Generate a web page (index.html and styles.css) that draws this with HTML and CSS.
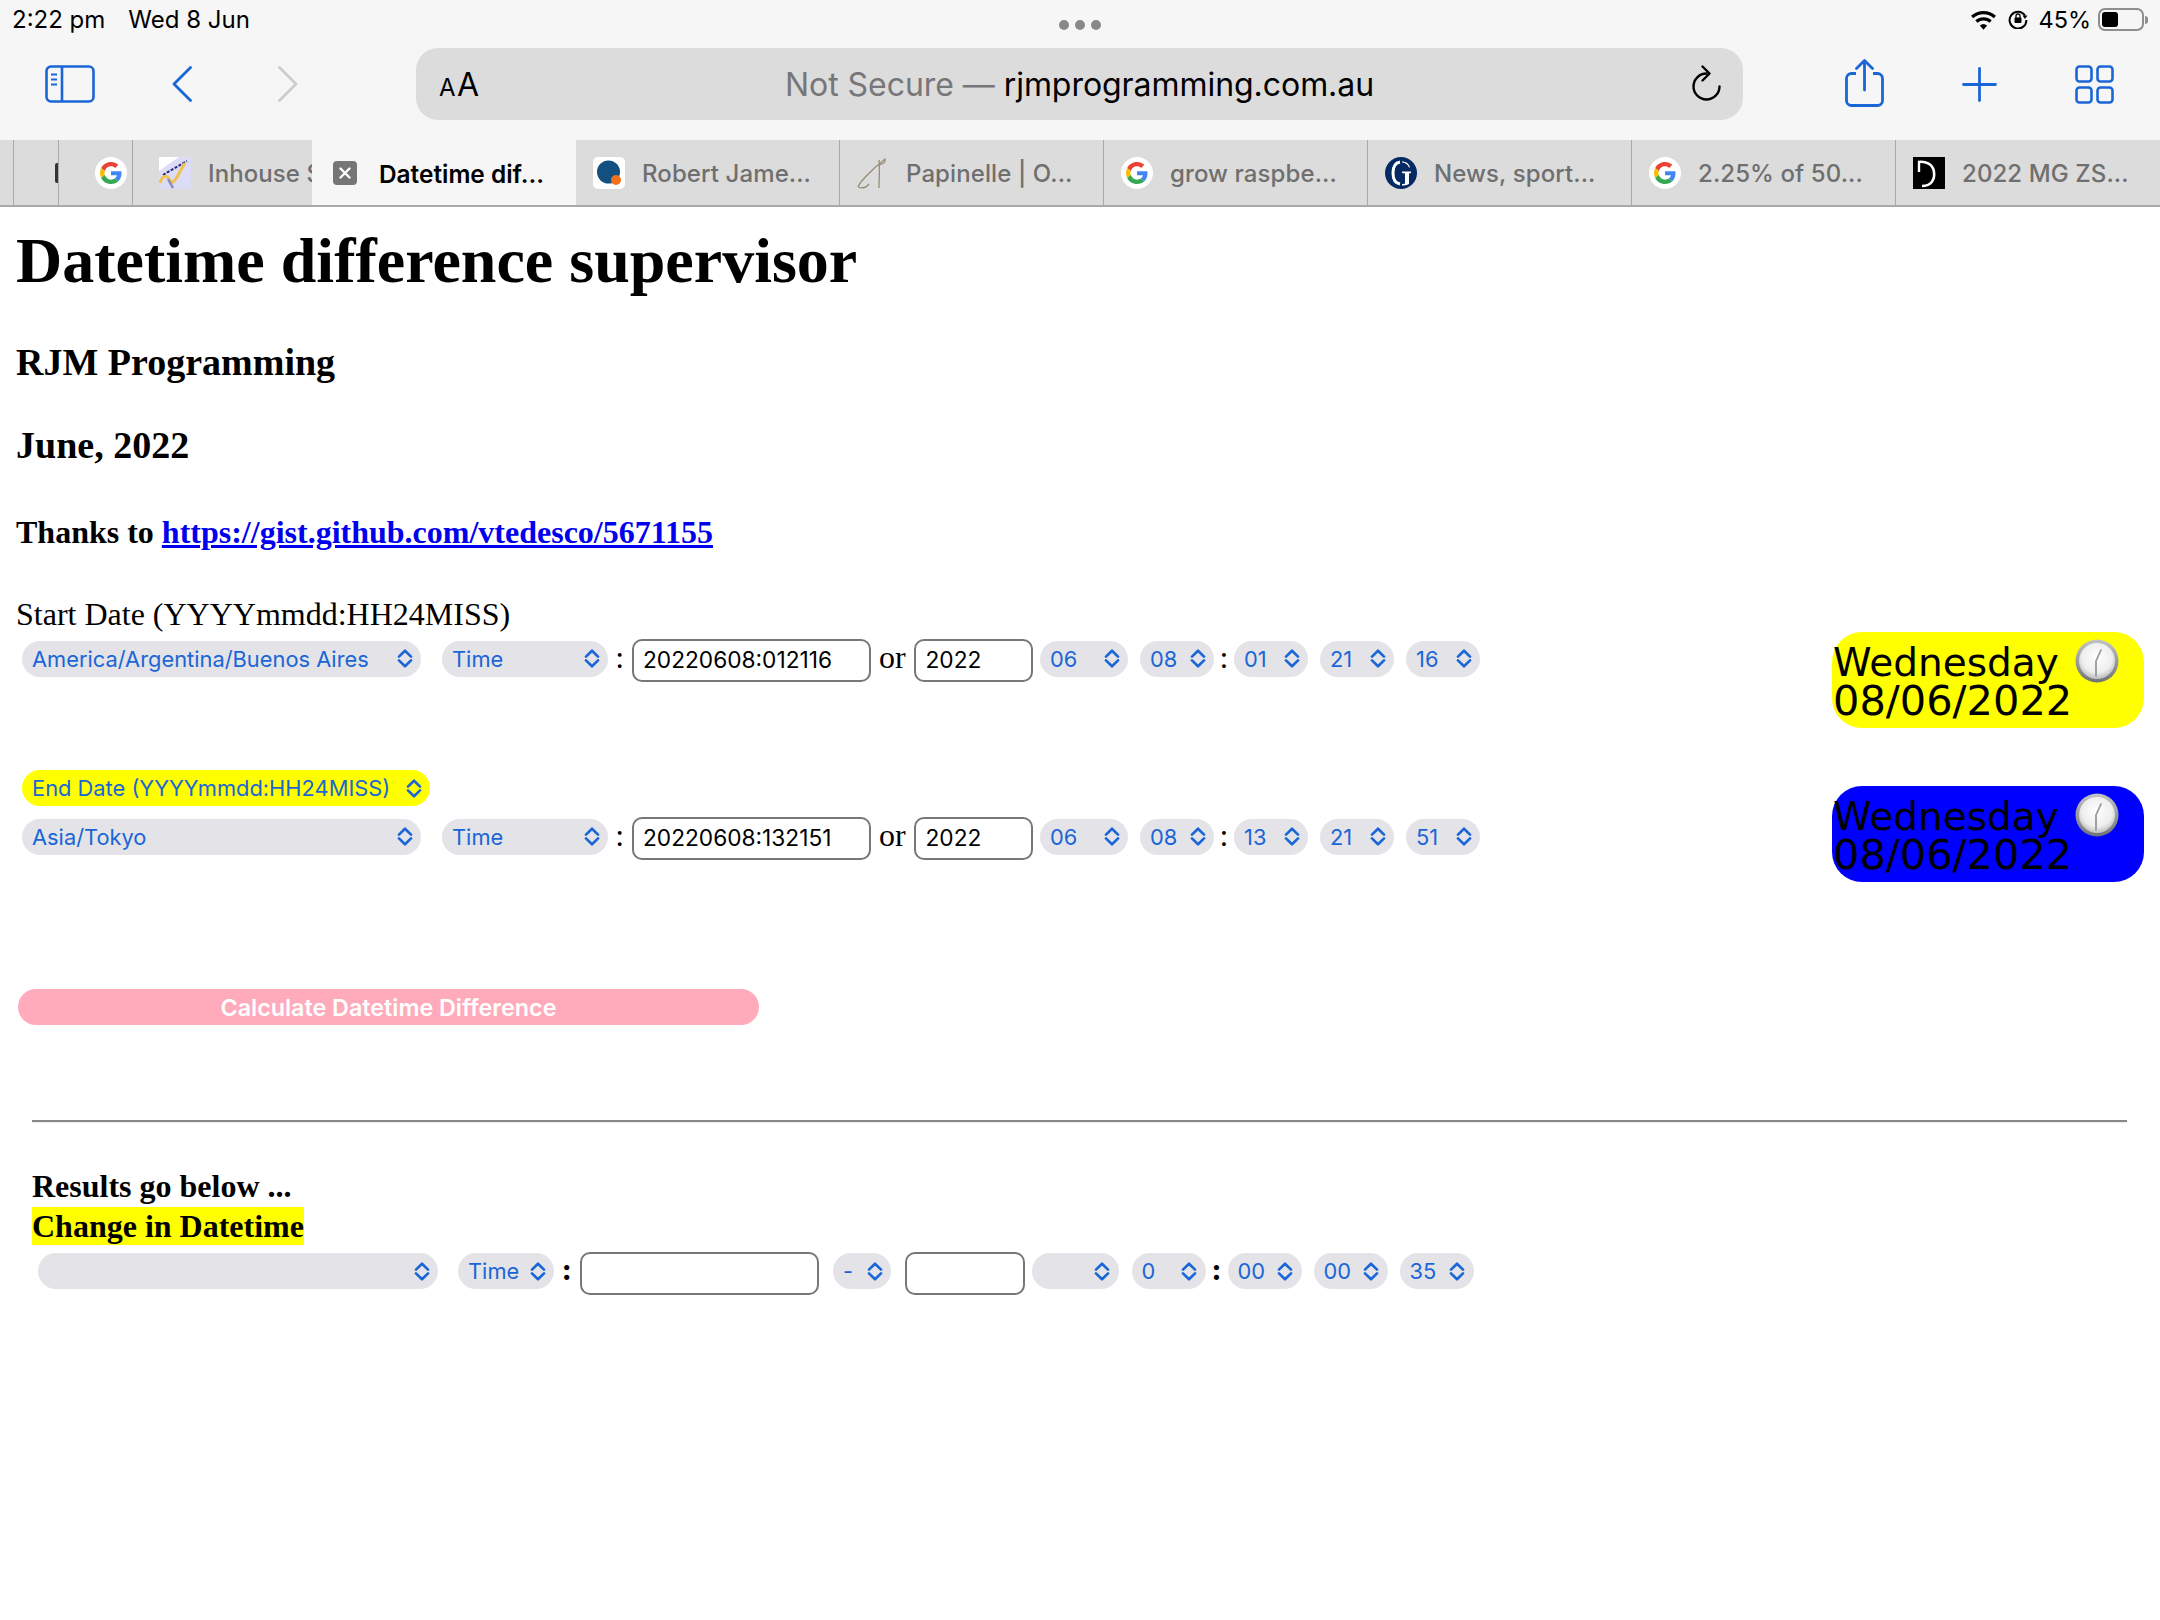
FILE: index.html
```html
<!DOCTYPE html>
<html lang="en">
<head>
<meta charset="utf-8">
<title>Datetime difference supervisor</title>
<link rel="stylesheet" href="styles.css">
</head>
<body>
<svg class="defs" aria-hidden="true">
  <symbol id="chev" viewBox="0 0 15 18"><path d="M1.800 7.200 7.500 1.600l5.700 5.600M1.800 10.800l5.700 5.600 5.700-5.600" fill="none" stroke="#1b66d6" stroke-width="2.500" stroke-linecap="round" stroke-linejoin="round"/></symbol>
  <symbol id="goog" viewBox="0 0 32 32">
    <circle cx="16" cy="16" r="16" fill="#fff"/>
    <g transform="translate(5 5) scale(.458)">
      <path fill="#EA4335" d="M24 9.500c3.540 0 6.710 1.220 9.210 3.600l6.850-6.850C35.900 2.380 30.470 0 24 0 14.620 0 6.510 5.380 2.560 13.220l7.980 6.190C12.430 13.720 17.740 9.500 24 9.500z"/>
      <path fill="#4285F4" d="M46.980 24.550c0-1.570-.15-3.090-.38-4.550H24v9.020h12.940c-.58 2.960-2.260 5.480-4.780 7.180l7.730 6c4.510-4.180 7.090-10.360 7.090-17.650z"/>
      <path fill="#FBBC05" d="M10.530 28.590c-.48-1.450-.76-2.990-.76-4.590s.27-3.140.76-4.590l-7.980-6.190C.92 16.460 0 20.120 0 24c0 3.880.92 7.540 2.560 10.780l7.970-6.190z"/>
      <path fill="#34A853" d="M24 48c6.480 0 11.930-2.130 15.890-5.810l-7.730-6c-2.150 1.450-4.920 2.300-8.160 2.300-6.260 0-11.570-4.220-13.470-9.910l-7.980 6.190C6.510 42.620 14.620 48 24 48z"/>
    </g>
  </symbol>
  <symbol id="clock" viewBox="0 0 44 44">
    <defs>
      <linearGradient id="rim" x1="0" y1="0" x2="0" y2="1"><stop offset="0" stop-color="#c4c4c4"/><stop offset="1" stop-color="#6f7378"/></linearGradient>
      <radialGradient id="face" cx=".5" cy=".4" r=".6"><stop offset="0" stop-color="#fff"/><stop offset=".7" stop-color="#eeeeee"/><stop offset="1" stop-color="#bdbdbd"/></radialGradient>
    </defs>
    <circle cx="22" cy="22" r="21.500" fill="url(#rim)"/>
    <circle cx="22" cy="22" r="18" fill="url(#face)"/>
    <path d="M21 37V22l5-11" fill="none" stroke="#9a9a9a" stroke-width="1.800" stroke-linecap="round" stroke-linejoin="round"/>
  </symbol>
</svg>

<header class="chrome">
  <div class="status">
    <div class="status-left"><span>2:22 pm</span><span>Wed 8 Jun</span></div>
    <div class="dots"><i></i><i></i><i></i></div>
    <div class="status-right">
      <svg class="wifi" viewBox="0 0 28 20"><path d="M14 20l-3.800-4.400a6 6 0 0 1 7.600 0z" fill="#000"/><path d="M6.600 11.600a11 11 0 0 1 14.800 0M2.200 6.800a17.600 17.600 0 0 1 23.600 0" fill="none" stroke="#000" stroke-width="3.400"/></svg>
      <svg class="lock" viewBox="0 0 20 20"><path d="M17 6.500A8.400 8.400 0 1 0 18.400 11" fill="none" stroke="#000" stroke-width="2"/><path d="M14.500 6.500h5l-2.500 3.500z" fill="#000"/><rect x="6.500" y="8.500" width="7" height="5.500" rx="1" fill="#000"/><path d="M8 9V7a2 2 0 0 1 4 0v2" fill="none" stroke="#000" stroke-width="1.300"/></svg>
      <span class="pct">45%</span>
      <div class="battery"><div class="battery-fill"></div></div>
      <div class="battery-nub"></div>
    </div>
  </div>
  <div class="toolbar">
    <svg class="ic-side" viewBox="0 0 50 38"><rect x="1.500" y="1.500" width="47" height="35" rx="4.500" fill="none" stroke="#1b66d6" stroke-width="2.600"/><path d="M17 1.500v35" stroke="#1b66d6" stroke-width="2.600"/><path d="M6 9.500h6M6 14.500h6M6 19.500h6" stroke="#1b66d6" stroke-width="2.200"/></svg>
    <svg class="ic-back" viewBox="0 0 20 36"><path d="M18.500 1.500 2 18l16.500 16.500" fill="none" stroke="#1b66d6" stroke-width="2.800" stroke-linecap="round" stroke-linejoin="round"/></svg>
    <svg class="ic-fwd" viewBox="0 0 20 36"><path d="M1.500 1.500 18 18 1.500 34.500" fill="none" stroke="#cccccc" stroke-width="2.800" stroke-linecap="round" stroke-linejoin="round"/></svg>
    <div class="url">
      <span class="aa"><small>A</small>A</span>
      <span class="url-text"><span class="url-dim">Not Secure — </span>rjmprogramming.com.au</span>
      <svg class="ic-reload" viewBox="0 0 30 36"><path d="M14.500 8.500A13 13 0 1 0 27.500 21.500" fill="none" stroke="#000" stroke-width="2.400" stroke-linecap="round"/><path d="M10.500 1.500 17.500 8.500 10.500 15.500" fill="none" stroke="#000" stroke-width="2.400" stroke-linecap="round" stroke-linejoin="round"/></svg>
    </div>
    <svg class="ic-share" viewBox="0 0 39 48"><path d="M11 14.500H6.500A5 5 0 0 0 1.500 19.500V41.500a5 5 0 0 0 5 5h26a5 5 0 0 0 5-5V19.500a5 5 0 0 0-5-5H28" fill="none" stroke="#1b66d6" stroke-width="2.800"/><path d="M19.500 31V2M11.500 9.500l8-8 8 8" fill="none" stroke="#1b66d6" stroke-width="2.800" stroke-linecap="round" stroke-linejoin="round"/></svg>
    <svg class="ic-plus" viewBox="0 0 35 35"><path d="M17.500 1.500v32M1.500 17.500h32" stroke="#1b66d6" stroke-width="2.800" stroke-linecap="round"/></svg>
    <svg class="ic-tabs" viewBox="0 0 39 39"><g fill="none" stroke="#1b66d6" stroke-width="2.600"><rect x="1.500" y="1.500" width="15" height="15" rx="3"/><rect x="22.500" y="1.500" width="15" height="15" rx="3"/><rect x="1.500" y="22.500" width="15" height="15" rx="3"/><rect x="22.500" y="22.500" width="15" height="15" rx="3"/></g></svg>
  </div>
  <nav class="tabs">
    <div class="tab tab-sliver"></div>
    <div class="tab tab-stack1"><i class="stack-mark"></i></div>
    <div class="tab tab-stack2"><svg class="fav"><use href="#goog"/></svg></div>
    <div class="tab tab-clip">
      <svg class="fav" viewBox="0 0 32 32"><rect width="32" height="32" fill="#dcdcf6"/><path d="M0 0h20L0 14z" fill="#fff"/><path d="M4 18 28 4" stroke="#2c2a78" stroke-width="2" stroke-dasharray="3 1.500"/><path d="M1 26c2-7 6-9 9-4s3 4 6 1 4-8 10-17" fill="none" stroke="#efc34a" stroke-width="3"/><path d="M9 22l5 9" stroke="#8a8ac0" stroke-width="2.500"/></svg>
      <span class="tab-label">Inhouse Sales</span>
    </div>
    <div class="tab tab-active">
      <svg class="fav-x" viewBox="0 0 24 24"><rect width="24" height="24" rx="4" fill="#767676"/><path d="M7.500 7.500l9 9M16.500 7.500l-9 9" stroke="#fff" stroke-width="2.400" stroke-linecap="round"/></svg>
      <span class="tab-label">Datetime dif...</span>
    </div>
    <div class="tab">
      <svg class="fav" viewBox="0 0 32 32"><rect width="32" height="32" rx="5" fill="#fff"/><circle cx="15.500" cy="15" r="11.500" fill="#14507f"/><circle cx="23" cy="23" r="5" fill="#f0701c"/></svg>
      <span class="tab-label">Robert Jame...</span>
    </div>
    <div class="tab">
      <svg class="fav" viewBox="0 0 32 32"><path d="M1 30C3 24 18 10 28 2c1 3-2 5-6 6M22 3c1 8 0 18 0 28M1 30c5 2 8 1 11-3" fill="none" stroke="#968f76" stroke-width="1.300"/></svg>
      <span class="tab-label">Papinelle | O...</span>
    </div>
    <div class="tab"><svg class="fav"><use href="#goog"/></svg><span class="tab-label">grow raspbe...</span></div>
    <div class="tab">
      <svg class="fav" viewBox="0 0 32 32"><circle cx="16" cy="16" r="16" fill="#052962"/><path d="M15 5C9 6 8 11 8 16s1 10 7 11" fill="none" stroke="#fff" stroke-width="3"/><path d="M17 4.500c4 0 7 2 8 6h-1c-1-3-4-5-7-5zM17 14.500h9v1.500l-2 .6V27c-2 1-5 1.500-7 1.500V27c1 0 2 0 3-.5V16.600l-3-.6z" fill="#fff"/></svg>
      <span class="tab-label">News, sport...</span>
    </div>
    <div class="tab"><svg class="fav"><use href="#goog"/></svg><span class="tab-label">2.25% of 50...</span></div>
    <div class="tab">
      <svg class="fav" viewBox="0 0 32 32"><rect width="32" height="32" fill="#000"/><path d="M5 5c8-1 15 2 16 10s-3 14-12 14" fill="none" stroke="#fff" stroke-width="2.600"/><path d="M6 5v10" stroke="#fff" stroke-width="2.400"/></svg>
      <span class="tab-label">2022 MG ZS...</span>
    </div>
  </nav>
</header>

<main class="page">
  <h1 class="title">Datetime difference supervisor</h1>
  <h2 class="sub sub-first">RJM Programming</h2>
  <h2 class="sub">June, 2022</h2>
  <h3 class="thanks">Thanks to <a href="#">https://gist.github.com/vtedesco/5671155</a></h3>
  <div class="start-label">Start Date (YYYYmmdd:HH24MISS)</div>

  <section class="block">
    <div class="controls controls-start">
      <div class="row">
        <span class="sel w-tz"><span>America/Argentina/Buenos Aires</span><svg class="chev"><use href="#chev"/></svg></span>
        <span class="sel w-time ml21"><span>Time</span><svg class="chev"><use href="#chev"/></svg></span>
        <span class="sep w-sep1">:</span>
        <span class="field w-field">20220608:012116</span>
        <span class="sep w-or">or</span>
        <span class="field w-year">2022</span>
        <span class="sel w-88 ml7"><span>06</span><svg class="chev"><use href="#chev"/></svg></span>
        <span class="sel w-74 ml12"><span>08</span><svg class="chev"><use href="#chev"/></svg></span>
        <span class="sep w-sep2">:</span>
        <span class="sel w-74"><span>01</span><svg class="chev"><use href="#chev"/></svg></span>
        <span class="sel w-74 ml12"><span>21</span><svg class="chev"><use href="#chev"/></svg></span>
        <span class="sel w-74 ml12"><span>16</span><svg class="chev"><use href="#chev"/></svg></span>
      </div>
    </div>
    <div class="badge badge-yellow">
      <div>Wednesday</div><div class="badge-date">08/06/2022</div>
      <svg class="clock"><use href="#clock"/></svg>
    </div>
  </section>

  <section class="block block-end">
    <div class="controls">
      <span class="sel sel-end"><span>End Date (YYYYmmdd:HH24MISS)</span><svg class="chev"><use href="#chev"/></svg></span>
      <div class="row row-end">
        <span class="sel w-tz"><span>Asia/Tokyo</span><svg class="chev"><use href="#chev"/></svg></span>
        <span class="sel w-time ml21"><span>Time</span><svg class="chev"><use href="#chev"/></svg></span>
        <span class="sep w-sep1">:</span>
        <span class="field w-field">20220608:132151</span>
        <span class="sep w-or">or</span>
        <span class="field w-year">2022</span>
        <span class="sel w-88 ml7"><span>06</span><svg class="chev"><use href="#chev"/></svg></span>
        <span class="sel w-74 ml12"><span>08</span><svg class="chev"><use href="#chev"/></svg></span>
        <span class="sep w-sep2">:</span>
        <span class="sel w-74"><span>13</span><svg class="chev"><use href="#chev"/></svg></span>
        <span class="sel w-74 ml12"><span>21</span><svg class="chev"><use href="#chev"/></svg></span>
        <span class="sel w-74 ml12"><span>51</span><svg class="chev"><use href="#chev"/></svg></span>
      </div>
    </div>
    <div class="badge badge-blue">
      <div>Wednesday</div><div class="badge-date">08/06/2022</div>
      <svg class="clock"><use href="#clock"/></svg>
    </div>
  </section>

  <button class="calc" type="button">Calculate Datetime Difference</button>
  <hr class="rule">

  <div class="results">
    <div class="results-line">Results go below ...</div>
    <div class="results-line"><mark class="hl">Change in Datetime</mark></div>
    <div class="row row-result">
      <span class="sel w-400"><span></span><svg class="chev"><use href="#chev"/></svg></span>
      <span class="sel w-96 ml20"><span>Time</span><svg class="chev"><use href="#chev"/></svg></span>
      <span class="sep sep-bold w-26">:</span>
      <span class="field w-field"></span>
      <span class="sel w-58 ml15"><span>-</span><svg class="chev"><use href="#chev"/></svg></span>
      <span class="field w-119 ml14"></span>
      <span class="sel w-87 ml7"><span></span><svg class="chev"><use href="#chev"/></svg></span>
      <span class="sel w-74 ml13"><span>0</span><svg class="chev"><use href="#chev"/></svg></span>
      <span class="sep sep-bold w-22">:</span>
      <span class="sel w-74"><span>00</span><svg class="chev"><use href="#chev"/></svg></span>
      <span class="sel w-74 ml12"><span>00</span><svg class="chev"><use href="#chev"/></svg></span>
      <span class="sel w-74 ml12"><span>35</span><svg class="chev"><use href="#chev"/></svg></span>
    </div>
  </div>
</main>
</body>
</html>
```
FILE: styles.css
```css
* { box-sizing: border-box; }
html, body { margin: 0; padding: 0; }
body { background: #fff; color: #000; font-family: "Liberation Serif", serif; width: 2160px; height: 1620px; overflow: hidden; }
.defs { position: absolute; width: 0; height: 0; }

.chrome { background: #f6f6f6; font-family: Inter, "Liberation Sans", sans-serif; }
.status { height: 48px; position: relative; display: flex; justify-content: space-between; padding: 0 12px 0 12px; }
.status-left { display: flex; gap: 23px; font-size: 24px; line-height: 40px; }
.dots { position: absolute; left: 1059px; top: 20px; display: flex; gap: 6px; }
.dots i { display: block; width: 10px; height: 10px; border-radius: 50%; background: #888; }
.status-right { display: flex; align-items: flex-start; }
.wifi { width: 27px; height: 20px; margin-top: 10px; }
.lock { width: 20px; height: 20px; margin: 9px 0 0 11px; }
.pct { font-size: 23.500px; line-height: 40px; margin-left: 10px; }
.battery { width: 46px; height: 23px; margin: 8px 0 0 7px; border: 2px solid #8e8e8e; border-radius: 7px; padding: 2px; }
.battery-fill { width: 16px; height: 15px; background: #000; border-radius: 3px; }
.battery-nub { width: 3px; height: 8px; margin: 16px 0 0 1px; background: #8e8e8e; border-radius: 0 3px 3px 0; }

.toolbar { height: 92px; display: flex; align-items: flex-start; padding-left: 45px; }
.ic-side { width: 50px; height: 38px; margin-top: 17px; }
.ic-back { width: 20px; height: 36px; margin: 18px 0 0 77px; }
.ic-fwd { width: 20px; height: 36px; margin: 18px 0 0 86px; }
.url { width: 1327px; height: 72px; margin-left: 118px; background: #dcdcdc; border-radius: 22px; display: flex; align-items: center; position: relative; padding-left: 23px; }
.aa { font-size: 32px; letter-spacing: .5px; line-height: 1; margin-top: 1px; }
.aa small { font-size: 24px; margin-right: 1px; }
.url-text { position: absolute; left: 369px; top: 1px; line-height: 72px; font-size: 32px; letter-spacing: -.05px; white-space: pre; }
.url-dim { color: #77777a; }
.ic-reload { width: 30px; height: 36px; margin-left: auto; margin-right: 21px; margin-top: -2px; }
.ic-share { width: 39px; height: 48px; margin: 11px 0 0 102px; }
.ic-plus { width: 35px; height: 35px; margin: 19px 0 0 78px; }
.ic-tabs { width: 39px; height: 39px; margin: 17px 0 0 78px; }

.tabs { height: 67px; display: flex; background: #dcdcdc; border-bottom: 2px solid #a9a9a9; }
.tab { flex: 0 0 264px; width: 264px; height: 65px; display: flex; align-items: center; padding-left: 17px; border-left: 1.500px solid #a9a9a9; overflow: hidden; white-space: nowrap; }
.tab:first-child { border-left: 0; }
.tab-sliver { flex-basis: 13px; width: 13px; padding: 0; }
.tab-stack1 { flex-basis: 45px; width: 45px; padding: 0; justify-content: flex-end; }
.stack-mark { display: block; width: 3px; height: 20px; background: #333; border-radius: 2px 0 0 2px; }
.tab-stack2 { flex-basis: 74px; width: 74px; padding: 0 5px 0 0; justify-content: flex-end; }
.tab-clip { flex-basis: 180px; width: 180px; padding-left: 26px; }
.tab-active { flex-basis: 264px; background: #f6f6f6; border-left: 0; padding-left: 21px; }
.tab-active + .tab { border-left: 0; flex-basis: 263px; width: 263px; }
.fav { width: 32px; height: 32px; flex: none; }
.fav-x { width: 24px; height: 24px; flex: none; }
.tab-label { font-size: 24px; font-weight: 500; color: #6f6f6f; margin: 2px 0 0 17px; letter-spacing: .1px; }
.tab-active .tab-label { color: #000; margin-left: 22px; font-weight: 600; font-size: 24.400px; letter-spacing: 0; }

.page { padding: 0 16px; }
.title { margin: 19px 0 0; font-size: 64px; line-height: 70px; font-weight: 700; }
.sub { margin: 39px 0 0; font-size: 38px; line-height: 44px; font-weight: 700; }
.sub-first { margin-top: 44px; }
.thanks { margin: 47px 0 0; font-size: 32px; line-height: 36px; font-weight: 700; }
.thanks a { color: #0000ee; }
.start-label { margin-top: 46px; font-size: 32px; line-height: 36px; }

.block { display: flex; justify-content: space-between; align-items: flex-start; height: 96px; }
.block-end { height: 112px; margin-top: 42px; }
.controls { padding-left: 6px; }
.controls-start { padding-top: 7px; }
.row { display: flex; align-items: center; height: 43px; }
.row-end { margin-top: 11px; }
.sel { display: flex; align-items: center; justify-content: space-between; height: 36px; flex: none; border-radius: 18px; background: #e3e3e8; color: #1b66d6; padding: 0 8.500px 0 10px; font-family: Inter, "Liberation Sans", sans-serif; font-size: 21.850px; white-space: nowrap; }
.row .sel { margin-bottom: 4px; }
.chev { width: 16px; height: 19px; flex: none; }
.sel-end { background: #ffff00; width: 408px; }
.field { display: block; height: 43px; flex: none; background: #fff; border: 2.500px solid #777; border-radius: 10px; padding-left: 9.500px; font-family: Inter, "Liberation Sans", sans-serif; font-size: 22.700px; line-height: 38px; white-space: nowrap; }
.sep { flex: none; text-align: center; font-size: 32px; line-height: 36px; margin-top: -8px; }
.sep-bold { font-weight: 700; }

.w-tz { width: 399px; }
.w-time { width: 166px; }
.w-sep1 { width: 23.500px; }
.w-sep2 { width: 20px; }
.w-or { width: 43.500px; }
.w-field { width: 239px; }
.w-year { width: 119px; }
.w-88 { width: 88px; }
.w-74 { width: 74px; }
.w-400 { width: 400px; }
.w-96 { width: 96px; }
.w-26 { width: 25.500px; }
.w-22 { width: 22px; }
.w-58 { width: 58px; }
.w-119 { width: 119.500px; }
.w-87 { width: 87px; }
.ml7 { margin-left: 7px; }
.ml12 { margin-left: 12px; }
.ml13 { margin-left: 13px; }
.ml14 { margin-left: 14px; }
.ml15 { margin-left: 14.500px; }
.ml20 { margin-left: 20px; }
.ml21 { margin-left: 21px; }

.badge { position: relative; flex: none; width: 312px; height: 96px; border-radius: 30px; padding: 12px 0 0 1px; font-family: "DejaVu Sans", sans-serif; font-size: 39px; line-height: 38px; }
.badge-date { font-size: 41.500px; }
.badge-yellow { background: #ffff00; }
.badge-blue { background: #0000ff; margin-top: 16px; }
.clock { position: absolute; left: 243px; top: 7px; width: 44px; height: 44px; }

.calc { display: block; width: 741px; height: 36px; margin: 107px 0 0 2px; padding: 0; border: 0; border-radius: 18px; background: #ffabbb; color: #fff; font-family: Inter, "Liberation Sans", sans-serif; font-size: 23.300px; font-weight: 600; }
.rule { margin: 95px 0 0 16px; width: 2095px; height: 3px; border: 0; border-top: 2px solid #888; border-bottom: 1px solid #eee; }

.results { padding-left: 16px; }
.results-line { font-size: 32px; line-height: 40px; font-weight: 700; }
.results-line:first-child { margin-top: 43px; }
.hl { background: #ffff00; color: #000; display: inline-block; line-height: 38px; }
.row-result { margin: 5.500px 0 0 6px; }
```
